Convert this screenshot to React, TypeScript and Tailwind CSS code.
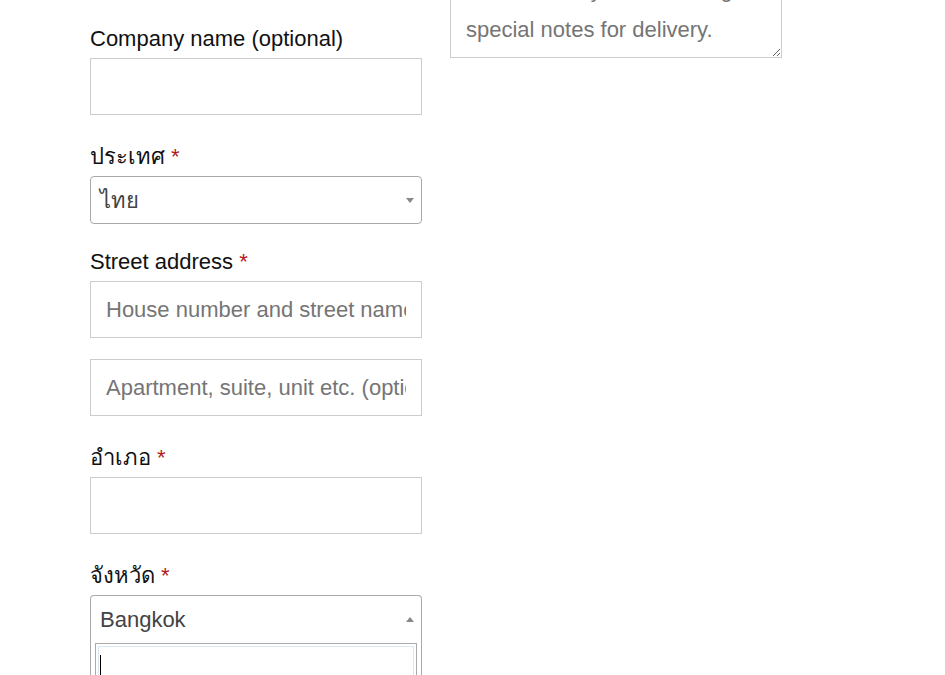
import React from "react";

function Req() {
  return <span className="text-[#b31b1b]"> *</span>;
}

function Label({ children }: { children: React.ReactNode }) {
  return <div className="h-[33px] leading-[33px] text-[#111]">{children}</div>;
}

function TextInput({ placeholder, className = "" }: { placeholder?: string; className?: string }) {
  return (
    <input
      type="text"
      readOnly
      placeholder={placeholder}
      className={`block w-[332px] h-[57px] border border-[#cccccc] bg-white px-[15px] text-[22px] text-[#444] placeholder:text-[#757575] outline-none ${className}`}
    />
  );
}

function ArrowDown() {
  return (
    <svg width="8" height="5" viewBox="0 0 8 5" className="block">
      <path d="M0 0 L8 0 L4 5 Z" fill="#888" />
    </svg>
  );
}

function ArrowUp() {
  return (
    <svg width="8" height="5" viewBox="0 0 8 5" className="block">
      <path d="M0 5 L8 5 L4 0 Z" fill="#888" />
    </svg>
  );
}

export default function App() {
  return (
    <div className="h-[675px] overflow-hidden bg-white font-['Liberation_Sans',Arial,sans-serif] text-[22px]">
      <div className="flex gap-[28px] pl-[90px]">
        <div className="w-[332px] pt-[22px]">
          <Label>Company name (optional)</Label>
          <TextInput className="mt-[3px]" />

          <div className="mt-[25px]">
            <Label>
              ประเทศ<Req />
            </Label>
            <div className="mt-[3px] flex h-[48px] w-[332px] items-center justify-between rounded-[4px] border border-[#aaaaaa] bg-white pl-[9px] pr-[7px] text-[#444]">
              <span>ไทย</span>
              <ArrowDown />
            </div>
          </div>

          <div className="mt-[21px]">
            <Label>
              Street address<Req />
            </Label>
            <TextInput className="mt-[3px]" placeholder="House number and street name" />
            <TextInput className="mt-[21px]" placeholder="Apartment, suite, unit etc. (optional)" />
          </div>

          <div className="mt-[25px]">
            <Label>
              อำเภอ<Req />
            </Label>
            <TextInput className="mt-[3px]" />
          </div>

          <div className="mt-[25px]">
            <Label>
              จังหวัด<Req />
            </Label>
            <div className="mt-[3px] w-[332px] rounded-t-[4px] border-x border-t border-[#aaaaaa] bg-white">
              <div className="flex h-[47px] items-center justify-between pl-[9px] pr-[7px] text-[#444]">
                <span>Bangkok</span>
                <ArrowUp />
              </div>
              <div className="px-[4px] pb-[4px]">
                <div className="border border-[#aaaaaa] p-[2px]">
                  <div className="h-[40px] border border-[#d6e7f5] pl-[1px] pt-[8px]">
                    <div className="h-[26px] w-[1px] bg-black" />
                  </div>
                </div>
              </div>
            </div>
          </div>
        </div>

        <div className="w-[332px]">
          <textarea
            readOnly
            placeholder="Notes about your order, e.g. special notes for delivery."
            className="-mt-[38px] block h-[96px] w-[332px] border border-[#cccccc] bg-white px-[15px] py-[7px] text-[22px] leading-[40px] text-[#444] placeholder:text-[#757575] outline-none"
          />
        </div>
      </div>
    </div>
  );
}
